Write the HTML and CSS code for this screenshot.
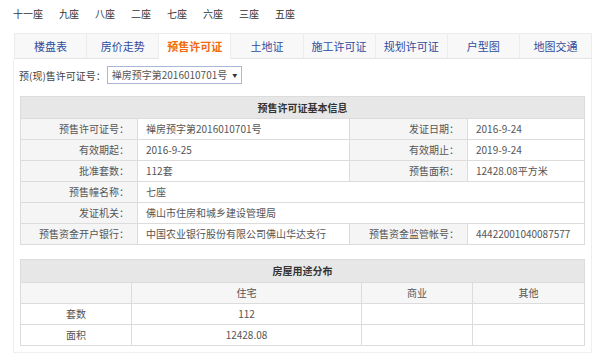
FILE: index.html
```html
<!DOCTYPE html>
<html>
<head>
<meta charset="utf-8">
<link rel="stylesheet" href="styles.css">
</head>
<body>
<div class="wrap">
  <div class="seats">
    <span>十一座</span><span>九座</span><span>八座</span><span>二座</span><span>七座</span><span>六座</span><span>三座</span><span>五座</span>
  </div>
  <ul class="tabs">
    <li>楼盘表</li>
    <li>房价走势</li>
    <li class="on">预售许可证</li>
    <li>土地证</li>
    <li>施工许可证</li>
    <li>规划许可证</li>
    <li>户型图</li>
    <li>地图交通</li>
  </ul>
  <div class="panel">
    <div class="pick">
      <span class="pick-label">预(现)售许可证号：</span>
      <span class="select">禅房预字第2016010701号<i>▼</i></span>
    </div>
    <table class="info">
      <colgroup><col style="width:117px"><col style="width:212px"><col style="width:118px"><col></colgroup>
      <tr><th colspan="4">预售许可证基本信息</th></tr>
      <tr><td class="k">预售许可证号：</td><td>禅房预字第2016010701号</td><td class="k">发证日期：</td><td>2016-9-24</td></tr>
      <tr><td class="k">有效期起：</td><td>2016-9-25</td><td class="k">有效期止：</td><td>2019-9-24</td></tr>
      <tr><td class="k">批准套数：</td><td>112套</td><td class="k">预售面积：</td><td>12428.08平方米</td></tr>
      <tr><td class="k">预售幢名称：</td><td colspan="3">七座</td></tr>
      <tr><td class="k">发证机关：</td><td colspan="3">佛山市住房和城乡建设管理局</td></tr>
      <tr><td class="k">预售资金开户银行：</td><td>中国农业银行股份有限公司佛山华达支行</td><td class="k">预售资金监管帐号：</td><td>44422001040087577</td></tr>
    </table>
    <table class="usage">
      <colgroup><col style="width:111px"><col style="width:230px"><col style="width:111px"><col></colgroup>
      <tr><th colspan="4">房屋用途分布</th></tr>
      <tr class="sub"><td></td><td>住宅</td><td>商业</td><td>其他</td></tr>
      <tr><td>套数</td><td>112</td><td></td><td></td></tr>
      <tr><td>面积</td><td>12428.08</td><td></td><td></td></tr>
    </table>
  </div>
</div>
</body>
</html>
```

FILE: styles.css
```css
* {
  box-sizing: border-box;
  margin: 0;
  padding: 0;
}

body {
  font-family: "Noto Sans CJK SC", "DejaVu Sans", sans-serif;
  font-size: 10px;
  color: #444;
  background: #fff;
}

.wrap {
  margin-left: 13px;
  width: 579px;
}

.seats {
  padding-top: 8px;
  height: 20px;
  line-height: 12px;
  color: #333;
}

.seats span {
  margin-right: 16px;
}

.tabs {
  list-style: none;
  display: flex;
  margin: 13px 0 0 1px;
  height: 26px;
  border-top: 1px solid #ececec;
  border-left: 1px solid #ececec;
  background: #f8f8f8;
}

.tabs li {
  flex: 1;
  text-align: center;
  line-height: 24px;
  font-size: 11px;
  color: #2f4c9e;
  border-right: 1px solid #ececec;
  border-bottom: 1px solid #e4e4e4;
}

.tabs li.on {
  background: #fff;
  color: #f26a10;
  font-weight: bold;
  border-bottom-color: #fff;
}

.panel {
  border: 1px solid #efefef;
  border-top: none;
  padding: 7px 6px 6px 6px;
}

.pick {
  display: flex;
  align-items: center;
  height: 18px;
}

.pick-label {
  margin-left: -1px;
  color: #444;
}

.select {
  margin-left: 1px;
  height: 18px;
  line-height: 16px;
  padding: 0 4px 0 4px;
  border: 1px solid #a9b7d8;
  color: #555;
}

.select i {
  font-style: normal;
  font-size: 5px;
  margin-left: 5px;
  vertical-align: 2px;
  color: #333;
}

table {
  width: 565px;
  border-collapse: collapse;
  table-layout: fixed;
  font-size: 10px;
}

th, td {
  border: 1px solid #dcdcdc;
  height: 21px;
  line-height: 12px;
  padding: 0 8px;
  white-space: nowrap;
  overflow: hidden;
}

th {
  background: #e7e7e7;
  height: 22px;
  font-weight: bold;
  color: #333;
}

.info {
  margin-top: 12px;
}

.info td {
  text-align: left;
  padding-left: 8px;
  color: #555;
}

.info td.k {
  background: #f5f5f5;
  text-align: right;
}

.usage {
  margin-top: 14px;
}

.usage th {
  height: 23px;
}

.usage td {
  text-align: center;
  color: #555;
}

.usage tr.sub td {
  background: #f6f6f6;
}
```
